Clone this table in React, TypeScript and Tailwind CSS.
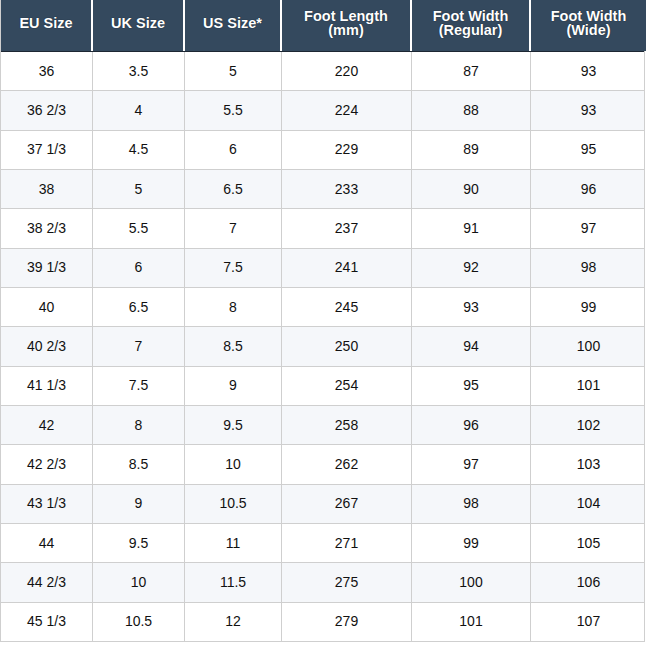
import React from 'react';

const COLS = 'grid grid-cols-[92px_92px_97px_130px_119px_115px]';

const HEADERS = ['EU Size', 'UK Size', 'US Size*', 'Foot Length\n(mm)', 'Foot Width\n(Regular)', 'Foot Width\n(Wide)'];

const ROWS: string[][] = [
  ['36', '3.5', '5', '220', '87', '93'],
  ['36 2/3', '4', '5.5', '224', '88', '93'],
  ['37 1/3', '4.5', '6', '229', '89', '95'],
  ['38', '5', '6.5', '233', '90', '96'],
  ['38 2/3', '5.5', '7', '237', '91', '97'],
  ['39 1/3', '6', '7.5', '241', '92', '98'],
  ['40', '6.5', '8', '245', '93', '99'],
  ['40 2/3', '7', '8.5', '250', '94', '100'],
  ['41 1/3', '7.5', '9', '254', '95', '101'],
  ['42', '8', '9.5', '258', '96', '102'],
  ['42 2/3', '8.5', '10', '262', '97', '103'],
  ['43 1/3', '9', '10.5', '267', '98', '104'],
  ['44', '9.5', '11', '271', '99', '105'],
  ['44 2/3', '10', '11.5', '275', '100', '106'],
  ['45 1/3', '10.5', '12', '279', '101', '107'],
];

export default function App() {
  return (
    <div className="w-[646px] min-h-[645px] bg-white font-['Liberation_Sans',Arial,sans-serif]">
      <div className="w-[645px] border-l border-r border-[#cfcfcf]">
        {/* Header */}
        <div className={`${COLS} h-[52px] border-b border-[#1d2733]`}>
          {HEADERS.map((h, i) => (
            <div
              key={h}
              className={`bg-[#34495e] flex items-center justify-center pb-[5px] text-center whitespace-pre-line text-white font-bold text-[14.5px] leading-[14px] [text-shadow:0_0_1px_#0b1520] ${i < HEADERS.length - 1 ? 'border-r-2 border-white' : ''}`}
            >
              {h}
            </div>
          ))}
        </div>

        {/* Body */}
        {ROWS.map((row, r) => (
          <div
            key={row[0]}
            className={`${COLS} h-[39.33px] border-b border-[#cfcfcf] ${r % 2 === 1 ? 'bg-[#f5f7fa]' : 'bg-white'}`}
          >
            {row.map((v, i) => (
              <div
                key={i}
                className={`flex items-center justify-center text-[14px] text-[#111] ${i < row.length - 1 ? 'border-r border-[#cfcfcf]' : ''}`}
              >
                {v}
              </div>
            ))}
          </div>
        ))}
      </div>
    </div>
  );
}
